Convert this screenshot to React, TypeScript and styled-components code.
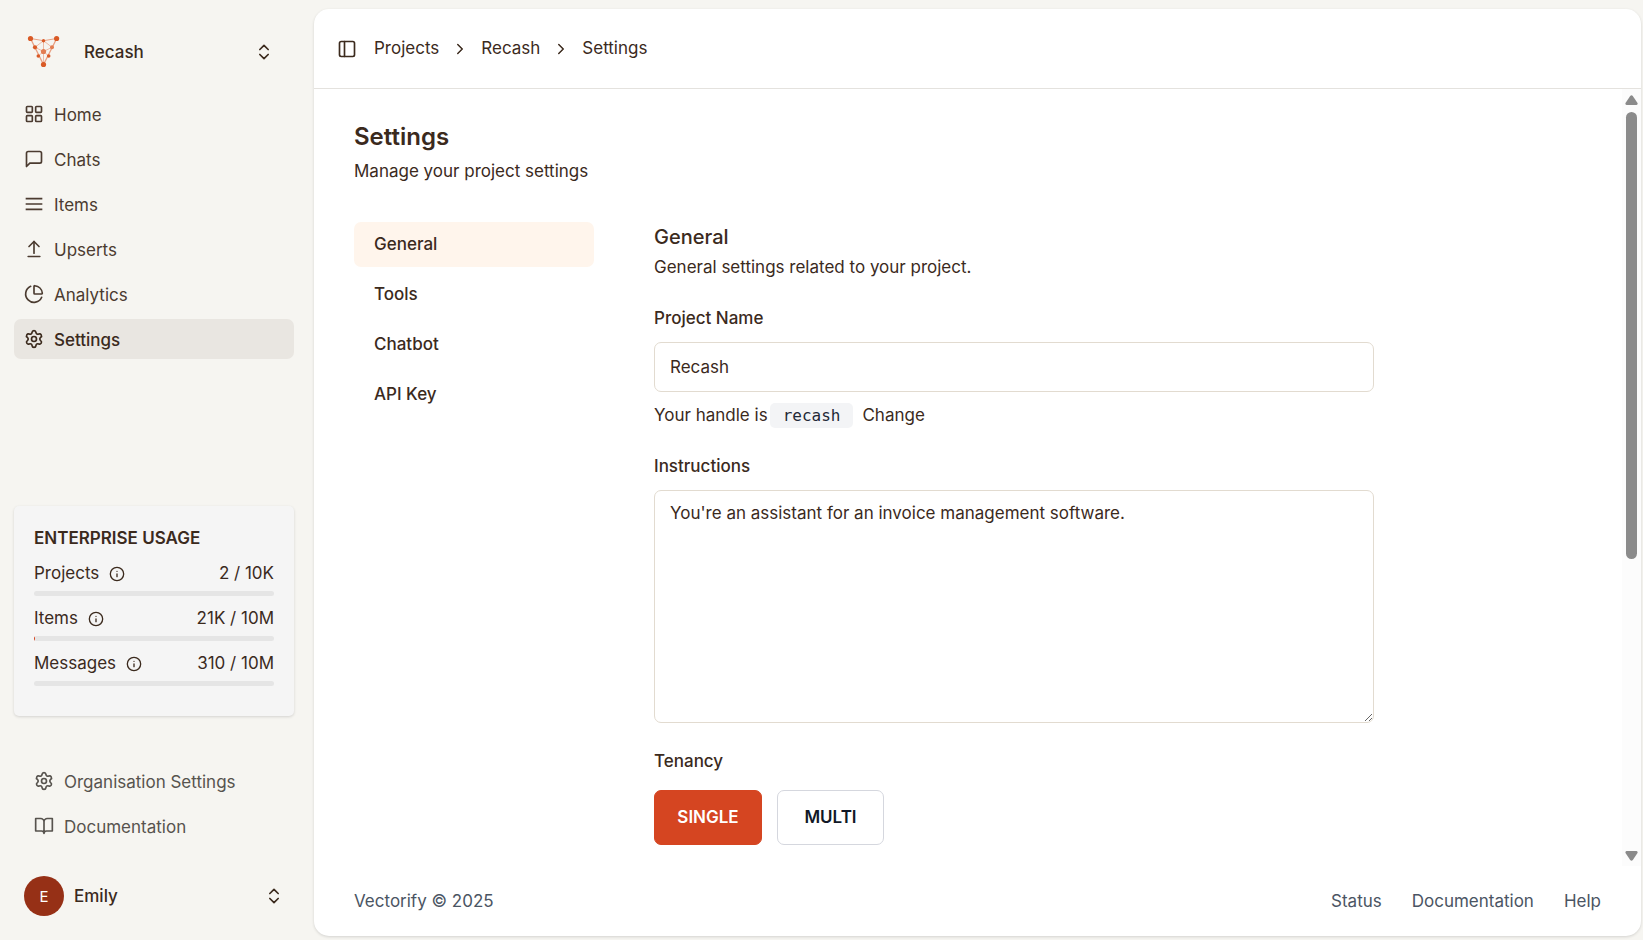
import React from "react";
import styled, { createGlobalStyle } from "styled-components";
import {
  ArrowUpFromLine,
  ChartPie,
  ChevronRight,
  ChevronsUpDown,
  Info,
  LayoutGrid,
  PanelLeft,
  Settings,
} from "lucide-react";

const GlobalStyle = createGlobalStyle`
  *, *::before, *::after { box-sizing: border-box; }
  body {
    margin: 0;
    background: #f6f5f1;
    color: #3b2a1d;
    font-family: Inter, "Liberation Sans", sans-serif;
    font-size: 17px;
    line-height: 25px;
  }
  h1, h2, p, ul { margin: 0; padding: 0; }
  ul { list-style: none; }
  a { color: inherit; text-decoration: none; }
  button, input, textarea { font: inherit; color: inherit; }
  button { cursor: pointer; }
  svg { flex: none; display: block; }
`;

const Shell = styled.div`
  display: flex;
  height: 100vh;
`;

const Sidebar = styled.aside`
  flex: none;
  width: 314px;
  padding: 32px 20px 24px 14px;
  display: flex;
  flex-direction: column;
`;

const Switcher = styled.button<{ $inset?: boolean }>`
  display: flex;
  align-items: center;
  gap: ${(p) => (p.$inset ? 20 : 10)}px;
  width: 100%;
  height: 40px;
  padding: 0 ${(p) => (p.$inset ? 20 : 10)}px 0 10px;
  border: 0;
  background: none;
  font-weight: 500;
  text-align: left;
`;

const SwitcherName = styled.span`
  flex: 1;
`;

const NavList = styled.ul<{ $muted?: boolean }>`
  display: flex;
  flex-direction: column;
  gap: 5px;
  margin-top: ${(p) => (p.$muted ? 45 : 22)}px;
  margin-bottom: ${(p) => (p.$muted ? 30 : 0)}px;
  padding: 0 ${(p) => (p.$muted ? 10 : 0)}px;
  color: ${(p) => (p.$muted ? "#57534e" : "#4b3b30")};
`;

const NavLink = styled.a<{ $active?: boolean }>`
  display: flex;
  align-items: center;
  gap: 10px;
  height: 40px;
  padding: 0 10px;
  border-radius: 7px;
  background: ${(p) => (p.$active ? "#e9e6e1" : "transparent")};
  font-weight: ${(p) => (p.$active ? 500 : 400)};
  color: ${(p) => (p.$active ? "#3b2a1d" : "inherit")};
`;

const NavText = styled.span`
  padding-top: 2px;
`;

const UsageCard = styled.section`
  margin-top: auto;
  padding: 20px 20px 30px;
  border-radius: 5px;
  background: #f5f5f5;
  box-shadow: 0 1px 3px rgba(0, 0, 0, 0.14);
  display: flex;
  flex-direction: column;
  gap: 10px;
`;

const UsageTitle = styled.h2`
  font-size: 17px;
  font-weight: 600;
`;

const UsageRow = styled.div`
  display: flex;
  align-items: center;
  justify-content: space-between;
  margin-bottom: 5px;
`;

const UsageLabel = styled.span`
  display: flex;
  align-items: center;
  gap: 10px;
`;

const UsageTrack = styled.div`
  height: 5px;
  border-radius: 3px;
  background: #e5e5e5;
  overflow: hidden;
`;

const UsageFill = styled.div`
  height: 100%;
  background: #d54521;
`;

const Avatar = styled.span`
  display: grid;
  place-items: center;
  width: 40px;
  height: 40px;
  border-radius: 50%;
  background: #963016;
  color: #fff;
  font-size: 15px;
  font-weight: 400;
`;

const PanelWrap = styled.div`
  flex: 1;
  min-width: 0;
  padding: 9px 2px 4px 0;
  display: flex;
`;

const Panel = styled.main`
  flex: 1;
  min-width: 0;
  display: flex;
  flex-direction: column;
  border-radius: 15px;
  background: #fff;
  box-shadow: 0 1px 3px rgba(0, 0, 0, 0.14);
  overflow: hidden;
`;

const TopBar = styled.header`
  flex: none;
  display: flex;
  align-items: center;
  gap: 17px;
  height: 80px;
  padding: 0 23px;
  border-bottom: 1px solid #e4e2de;
`;

const IconButton = styled.button`
  padding: 0;
  border: 0;
  background: none;
`;

const Crumbs = styled.nav`
  display: flex;
  align-items: center;
  gap: 12px;
`;

const Body = styled.div`
  flex: 1;
  min-height: 0;
  display: flex;
`;

const Scroller = styled.div`
  flex: 1;
  min-width: 0;
  padding: 30px 40px 0;
  overflow-y: auto;
  scrollbar-width: none;
`;

const ScrollRail = styled.div`
  flex: none;
  width: 19px;
  padding: 6px 0 5px;
  display: flex;
  flex-direction: column;
  align-items: center;
  gap: 7px;
  background: #fcfcfc;
  color: #8b8b8b;
`;

const RailTrack = styled.div`
  flex: 1;
  width: 11px;
`;

const RailThumb = styled.div`
  height: 61%;
  border-radius: 6px;
  background: #8b8b8b;
`;

const PageTitle = styled.h1`
  margin-bottom: 5px;
  font-size: 24px;
  line-height: 35px;
  font-weight: 600;
`;

const Columns = styled.div`
  display: flex;
  align-items: flex-start;
  gap: 60px;
  margin-top: 38px;
`;

const TabList = styled.nav`
  flex: none;
  width: 240px;
  display: flex;
  flex-direction: column;
  gap: 5px;
`;

const TabLink = styled.a<{ $active?: boolean }>`
  padding: 10px 20px;
  border-radius: 7px;
  background: ${(p) => (p.$active ? "#fff5ec" : "transparent")};
  font-weight: 500;
`;

const Form = styled.form`
  flex: 1;
  min-width: 0;
  max-width: 720px;
  display: flex;
  flex-direction: column;
`;

const SectionTitle = styled.h2`
  margin-bottom: 3px;
  font-size: 20px;
  line-height: 30px;
  font-weight: 500;
`;

const Field = styled.div`
  display: flex;
  flex-direction: column;
  gap: 11px;
  margin-top: 26px;
`;

const Label = styled.label`
  font-weight: 500;
`;

const TextInput = styled.input`
  width: 100%;
  height: 50px;
  padding: 0 15px;
  border: 1px solid #e2dbd0;
  border-radius: 7px;
  background: #fff;
`;

const TextArea = styled.textarea`
  display: block;
  width: 100%;
  height: 233px;
  padding: 10px 15px;
  border: 1px solid #e2dbd0;
  border-radius: 7px;
  background: #fff;
  resize: vertical;
`;

const Hint = styled.p`
  display: flex;
  align-items: center;
  gap: 2px;
`;

const Handle = styled.code`
  margin-right: 7px;
  padding: 0 13px;
  border-radius: 5px;
  background: #f3f4f6;
  color: #1f2937;
  font-family: "DejaVu Sans Mono", monospace;
  font-size: 16px;
`;

const Choices = styled.div`
  display: flex;
  gap: 15px;
  margin-top: 5px;
`;

const Choice = styled.button<{ $active?: boolean }>`
  width: ${(p) => (p.$active ? 108 : 107)}px;
  height: 55px;
  padding: 0;
  border: 1px solid ${(p) => (p.$active ? "#d54521" : "#d5d7de")};
  border-radius: 7px;
  background: ${(p) => (p.$active ? "#d54521" : "#fff")};
  color: ${(p) => (p.$active ? "#fff" : "#111827")};
  font-weight: 600;
`;

const Footer = styled.footer`
  flex: none;
  display: flex;
  align-items: center;
  justify-content: space-between;
  height: 70px;
  padding: 0 40px;
  color: #4b5563;
`;

const FooterLinks = styled.nav`
  display: flex;
  gap: 30px;
`;

const Logo = () => (
  <svg width="40" height="40" viewBox="0 0 40 40" aria-hidden="true">
    <g stroke="#e9a184" strokeWidth="1" fill="none">
      <path d="M6.5 6.5 19.5 32.5 32.7 6.5" strokeWidth="1.3" />
      <path d="M6.5 6.5 19.5 8.7 32.7 6.5" />
      <path d="M11 15.3 19.5 8.7 28 15.3 19.5 19.5Z" strokeWidth="0.7" />
      <path d="M19.5 8.7V32.5M14.3 24 19.5 19.5 24.7 24" strokeWidth="0.7" />
    </g>
    <g fill="#d95a26">
      <circle cx="6.5" cy="6.5" r="2.6" />
      <circle cx="32.6" cy="6.5" r="2.6" />
      <circle cx="19.5" cy="8.7" r="1.7" />
      <circle cx="11" cy="15.3" r="2.1" />
      <circle cx="14.3" cy="24" r="1.8" />
      <circle cx="24.7" cy="24" r="1.8" />
      <circle cx="19.5" cy="32.5" r="2.6" />
    </g>
    <g fill="#e27d52">
      <circle cx="28" cy="15.3" r="2" />
      <circle cx="19.5" cy="19.5" r="2.6" />
    </g>
  </svg>
);

const StrokeIcon = ({ d, cap = "round" }: { d: string; cap?: "round" | "butt" }) => (
  <svg
    width="20"
    height="20"
    viewBox="0 0 24 24"
    fill="none"
    stroke="currentColor"
    strokeWidth="2"
    strokeLinecap={cap}
    strokeLinejoin="round"
    aria-hidden="true"
  >
    <path d={d} />
  </svg>
);

const ChatIcon = () => (
  <StrokeIcon d="M21 15a2 2 0 0 1-2 2H7l-4 4V5a2 2 0 0 1 2-2h14a2 2 0 0 1 2 2z" />
);
const LinesIcon = () => <StrokeIcon cap="butt" d="M2 5.6h20M2 12h20M2 18.4h20" />;
const BookIcon = () => (
  <StrokeIcon d="M2 3h6a4 4 0 0 1 4 4v14a3 3 0 0 0-3-3H2zM22 3h-6a4 4 0 0 0-4 4v14a3 3 0 0 1 3-3h7z" />
);

const Arrow = ({ down }: { down?: boolean }) => (
  <svg width="13" height="10" viewBox="0 0 13 10" fill="currentColor" aria-hidden="true">
    <path
      d={
        down
          ? "M1.5 0h10q1.5 0.5 1 2L7.8 9q-1.3 1.6-2.6 0L0.5 2Q0 0.5 1.5 0z"
          : "M1.5 10h10q1.5-0.5 1-2L7.8 1q-1.3-1.6-2.6 0L0.5 8Q0 9.5 1.5 10z"
      }
    />
  </svg>
);

const mainNav = [
  { label: "Home", icon: <LayoutGrid size={20} /> },
  { label: "Chats", icon: <ChatIcon /> },
  { label: "Items", icon: <LinesIcon /> },
  { label: "Upserts", icon: <ArrowUpFromLine size={20} /> },
  { label: "Analytics", icon: <ChartPie size={20} /> },
  { label: "Settings", icon: <Settings size={20} />, active: true },
];

const usage = [
  { label: "Projects", value: "2 / 10K", percent: 0.02 },
  { label: "Items", value: "21K / 10M", percent: 0.21 },
  { label: "Messages", value: "310 / 10M", percent: 0 },
];

const tabs = ["General", "Tools", "Chatbot", "API Key"];

export default function App() {
  return (
    <>
      <GlobalStyle />
      <Shell>
        <Sidebar>
          <Switcher type="button" $inset>
            <Logo />
            <SwitcherName>Recash</SwitcherName>
            <ChevronsUpDown size={20} />
          </Switcher>
          <nav aria-label="Project">
            <NavList>
              {mainNav.map((item) => (
                <li key={item.label}>
                  <NavLink
                    href="#"
                    $active={item.active}
                    aria-current={item.active ? "page" : undefined}
                  >
                    {item.icon}
                    <NavText>{item.label}</NavText>
                  </NavLink>
                </li>
              ))}
            </NavList>
          </nav>
          <UsageCard>
            <UsageTitle>ENTERPRISE USAGE</UsageTitle>
            {usage.map((item) => (
              <div key={item.label}>
                <UsageRow>
                  <UsageLabel>
                    {item.label}
                    <Info size={16} />
                  </UsageLabel>
                  <span>{item.value}</span>
                </UsageRow>
                <UsageTrack>
                  <UsageFill style={{ width: `${item.percent}%` }} />
                </UsageTrack>
              </div>
            ))}
          </UsageCard>
          <NavList $muted>
            <li>
              <NavLink href="#">
                <Settings size={20} />
                <NavText>Organisation Settings</NavText>
              </NavLink>
            </li>
            <li>
              <NavLink href="#">
                <BookIcon />
                <NavText>Documentation</NavText>
              </NavLink>
            </li>
          </NavList>
          <Switcher type="button">
            <Avatar>E</Avatar>
            <SwitcherName>Emily</SwitcherName>
            <ChevronsUpDown size={20} />
          </Switcher>
        </Sidebar>
        <PanelWrap>
          <Panel>
            <TopBar>
              <IconButton type="button" aria-label="Toggle sidebar">
                <PanelLeft size={20} />
              </IconButton>
              <Crumbs aria-label="Breadcrumb">
                <a href="#">Projects</a>
                <ChevronRight size={18} />
                <a href="#">Recash</a>
                <ChevronRight size={18} />
                <span>Settings</span>
              </Crumbs>
            </TopBar>
            <Body>
              <Scroller>
                <PageTitle>Settings</PageTitle>
                <p>Manage your project settings</p>
                <Columns>
                  <TabList aria-label="Settings sections">
                    {tabs.map((tab, i) => (
                      <TabLink key={tab} href="#" $active={i === 0}>
                        {tab}
                      </TabLink>
                    ))}
                  </TabList>
                  <Form>
                    <SectionTitle>General</SectionTitle>
                    <p>General settings related to your project.</p>
                    <Field>
                      <Label htmlFor="name">Project Name</Label>
                      <TextInput id="name" defaultValue="Recash" />
                      <Hint>
                        Your handle is <Handle>recash</Handle>
                        <a href="#">Change</a>
                      </Hint>
                    </Field>
                    <Field>
                      <Label htmlFor="instructions">Instructions</Label>
                      <TextArea
                        id="instructions"
                        defaultValue="You're an assistant for an invoice management software."
                      />
                    </Field>
                    <Field role="group" aria-labelledby="tenancy">
                      <Label as="span" id="tenancy">
                        Tenancy
                      </Label>
                      <Choices>
                        <Choice type="button" $active>
                          SINGLE
                        </Choice>
                        <Choice type="button">MULTI</Choice>
                      </Choices>
                    </Field>
                  </Form>
                </Columns>
              </Scroller>
              <ScrollRail aria-hidden="true">
                <Arrow />
                <RailTrack>
                  <RailThumb />
                </RailTrack>
                <Arrow down />
              </ScrollRail>
            </Body>
            <Footer>
              <span>Vectorify © 2025</span>
              <FooterLinks>
                <a href="#">Status</a>
                <a href="#">Documentation</a>
                <a href="#">Help</a>
              </FooterLinks>
            </Footer>
          </Panel>
        </PanelWrap>
      </Shell>
    </>
  );
}
